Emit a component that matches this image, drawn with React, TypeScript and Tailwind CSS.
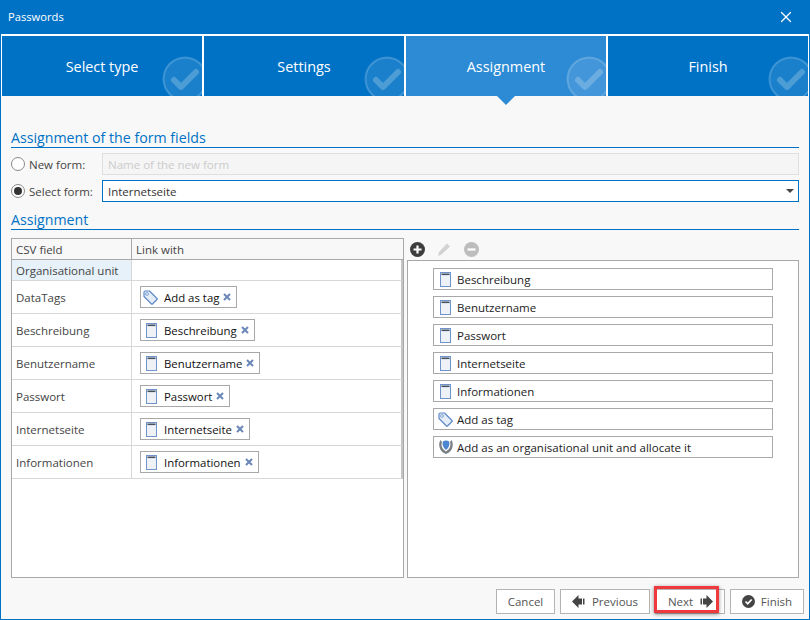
import { X } from "lucide-react";

const font = "font-['Open_Sans','Noto_Sans',sans-serif]";

function DocIcon() {
  return (
    <svg width="11" height="15" viewBox="0 0 11 15" className="shrink-0">
      <rect x="0.5" y="0.5" width="10" height="14" fill="#eef1f6" stroke="#6f93cc" />
      <rect x="1.500" y="1.500" width="8" height="1.600" fill="#46505f" />
    </svg>
  );
}

function TagIcon() {
  return (
    <svg width="15" height="15" viewBox="0 0 15 15" className="shrink-0">
      <path d="M1 2.200Q1 1 2.200 1H6.500L14 8.500Q14.500 9 14 9.500L9.500 14Q9 14.500 8.500 14L1 6.500z" fill="#e4ecf7" stroke="#5f8ac9" strokeWidth="1.200" strokeLinejoin="round" />
      <circle cx="4" cy="4" r="1.400" fill="#fff" stroke="#5f8ac9" strokeWidth="0.8" />
    </svg>
  );
}

function UnitIcon() {
  return (
    <svg width="16" height="16" viewBox="0 0 16 16" className="shrink-0">
      <path d="M2.500 1C.5 4 .5 10 5 13.500L8 15l3-1.500C15.500 10 15.500 4 13.500 1L12 3c1 3 .5 6.500-4 9.500C3.500 9.500 3 6 4 3z" fill="#7a7f87" />
      <path d="M4.800 2.500Q8 .5 11.200 2.500C12 6 10.800 8.800 8 11 5.200 8.800 4 6 4.800 2.500z" fill="#4d86d0" />
    </svg>
  );
}

function Tab({ label, active }: { label: string; active?: boolean }) {
  return (
    <div
      className={`relative flex-1 h-[60px] flex items-center justify-center text-[14.400px] text-white ${active ? "bg-[#2d8bd5]" : "bg-[#0072c6]"}`}
    >
      <span className="pt-[2px]">{label}</span>
      <div className="absolute inset-0 overflow-hidden">
        <svg width="46" height="46" viewBox="0 0 46 46" className="absolute right-[-6px] top-[20px]">
          <circle cx="23" cy="23" r="21.500" fill="#ffffff" fillOpacity="0.1" stroke="#ffffff" strokeOpacity="0.2" strokeWidth="2" />
          <path d="M12 24l7 7 15-15" fill="none" stroke="#ffffff" strokeOpacity="0.22" strokeWidth="6" strokeLinecap="round" strokeLinejoin="round" />
        </svg>
      </div>
      {active && (
        <div className="absolute left-1/2 -translate-x-1/2 bottom-[-9px] w-0 h-0 border-l-[9px] border-r-[9px] border-t-[9px] border-l-transparent border-r-transparent border-t-[#2d8bd5]" />
      )}
    </div>
  );
}

function Heading({ children }: { children: string }) {
  return (
    <div className="h-[19px] border-b border-[#0072c6] text-[14.200px] leading-[18px] text-[#0072c6]">
      {children}
    </div>
  );
}

function Radio({ label, checked }: { label: string; checked?: boolean }) {
  return (
    <div className="w-[91px] shrink-0 flex items-center gap-[4px] text-[11.500px] text-[#444]">
      <div className="size-[14px] rounded-full border border-[#8a8a8a] bg-white flex items-center justify-center">
        {checked && <div className="size-[8px] rounded-full bg-[#333]" />}
      </div>
      <span className="pt-[1px]">{label}</span>
    </div>
  );
}

function Chip({ icon, label }: { icon: "doc" | "tag"; label: string }) {
  return (
    <div className="h-[22px] inline-flex items-center border border-[#a8a8a8] bg-white pr-[5px] text-[11.400px] text-[#111]">
      <span className={`w-[23px] flex shrink-0 ${icon === "doc" ? "pl-[5px]" : "pl-[2px]"}`}>
        {icon === "doc" ? <DocIcon /> : <TagIcon />}
      </span>
      <span className="pt-[1px]">{label}</span>
      <svg width="8" height="8" viewBox="0 0 8 8" className="ml-[4px]">
        <path d="M1 1l6 6M7 1L1 7" stroke="#6b86b8" strokeWidth="2" />
      </svg>
    </div>
  );
}

function Row({ name, icon, label }: { name: string; icon: "doc" | "tag"; label: string }) {
  return (
    <div className="h-[33px] flex border-b border-r-[2px] border-b-[#d8d8d8] border-r-[#c4c4c4]">
      <div className="w-[120px] shrink-0 border-r border-[#d8d8d8] pl-[4px] pt-[1px] flex items-center text-[11.500px] text-[#444]">{name}</div>
      <div className="pl-[8px] flex items-center">
        <Chip icon={icon} label={label} />
      </div>
    </div>
  );
}

function Item({ icon, label }: { icon: React.ReactNode; label: string }) {
  return (
    <div className="h-[22px] flex items-center border border-[#a8a8a8] bg-white text-[11.500px] text-[#222]">
      <span className="w-[23px] shrink-0 flex justify-center">{icon}</span>
      <span className="pt-[1px]">{label}</span>
    </div>
  );
}

function Btn({ children, className = "" }: { children: React.ReactNode; className?: string }) {
  return (
    <div className={`h-[25px] flex items-center justify-center gap-[6px] border border-[#b4b4b4] bg-white text-[11.500px] text-[#555] ${className}`}>
      {children}
    </div>
  );
}

export default function App() {
  return (
    <div className={`w-[810px] h-[620px] flex flex-col overflow-hidden bg-[#0072c6] ${font}`}>
      <div className="h-[34px] shrink-0 flex items-center justify-between pl-[8px] pr-[15px] text-[11.200px] text-white">
        <span className="pt-[1px]">Passwords</span>
        <X size={18} strokeWidth={1.7} />
      </div>

      <div className="flex-1 mx-[1px] mb-[1px] bg-[#f8f8f8] flex flex-col min-h-0">
        <div className="shrink-0 bg-white px-[1px] pt-[2px] flex gap-[2px]">
          <Tab label="Select type" />
          <Tab label="Settings" />
          <Tab label="Assignment" active />
          <Tab label="Finish" />
        </div>

        <div className="flex-1 min-h-0 flex flex-col pl-[10px] pr-[10px] pt-[33px]">
          <Heading>Assignment of the form fields</Heading>
          <div className="mt-[5px] flex items-center h-[22px]">
            <Radio label="New form:" />
            <div className="flex-1 h-[22px] border border-[#dfdfdf] bg-[#f5f5f5] pl-[5px] pt-[1px] flex items-center text-[11.500px] text-[#ccc]">
              Name of the new form
            </div>
          </div>
          <div className="mt-[5px] flex items-center h-[22px]">
            <Radio label="Select form:" checked />
            <div className="flex-1 h-[22px] border border-[#0072c6] bg-white pl-[5px] pr-[4px] flex items-center justify-between text-[11.500px] text-[#333]">
              <span className="pt-[1px]">Internetseite</span>
              <div className="w-0 h-0 border-l-[4px] border-r-[4px] border-t-[4px] border-l-transparent border-r-transparent border-t-[#444]" />
            </div>
          </div>
          <div className="mt-[9px]">
            <Heading>Assignment</Heading>
          </div>

          <div className="mt-[8px] flex-1 min-h-0 flex gap-[3px] mb-[41px]">
            <div className="w-[393px] shrink-0 border border-[#a8a8a8] bg-white">
              <div className="h-[21px] flex border-b border-[#a8a8a8] bg-[#f8f8f8] text-[11.500px] text-[#444]">
                <div className="w-[120px] shrink-0 border-r border-[#a8a8a8] pl-[4px] pt-[1px] flex items-center">CSV field</div>
                <div className="pl-[4px] pt-[1px] flex items-center">Link with</div>
              </div>
              <div className="h-[21px] flex border-b border-r-[2px] border-b-[#d8d8d8] border-r-[#c4c4c4]">
                <div className="w-[120px] shrink-0 border-r border-[#d8d8d8] bg-[#e6f1f9] pl-[4px] pt-[1px] flex items-center text-[11.500px] text-[#444]">Organisational unit</div>
              </div>
              <Row name="DataTags" icon="tag" label="Add as tag" />
              <Row name="Beschreibung" icon="doc" label="Beschreibung" />
              <Row name="Benutzername" icon="doc" label="Benutzername" />
              <Row name="Passwort" icon="doc" label="Passwort" />
              <Row name="Internetseite" icon="doc" label="Internetseite" />
              <Row name="Informationen" icon="doc" label="Informationen" />
            </div>

            <div className="flex-1 flex flex-col min-w-0">
              <div className="h-[22px] shrink-0 flex items-center gap-[12px] pl-[3px]">
                <svg width="15" height="15" viewBox="0 0 15 15">
                  <circle cx="7.500" cy="7.500" r="7.500" fill="#3d3d3d" />
                  <path d="M7.500 3.500v8M3.500 7.500h8" stroke="#fff" strokeWidth="2.200" />
                </svg>
                <svg width="15" height="15" viewBox="0 0 15 15">
                  <path d="M1 14l1-4 8-8.500 3 3-8.500 8z" fill="#d2d2d2" />
                </svg>
                <svg width="15" height="15" viewBox="0 0 15 15">
                  <circle cx="7.500" cy="7.500" r="7.500" fill="#bdbdbd" />
                  <path d="M3.500 7.500h8" stroke="#fff" strokeWidth="2.200" />
                </svg>
              </div>
              <div className="flex-1 min-h-0 border border-[#a8a8a8] bg-white pl-[25px] pr-[25px] pt-[7px] flex flex-col gap-[6px]">
                <Item icon={<DocIcon />} label="Beschreibung" />
                <Item icon={<DocIcon />} label="Benutzername" />
                <Item icon={<DocIcon />} label="Passwort" />
                <Item icon={<DocIcon />} label="Internetseite" />
                <Item icon={<DocIcon />} label="Informationen" />
                <Item icon={<TagIcon />} label="Add as tag" />
                <Item icon={<UnitIcon />} label="Add as an organisational unit and allocate it" />
              </div>
            </div>
          </div>
        </div>

        <div className="relative shrink-0 h-[0px]">
          <div className="absolute right-[5px] bottom-[5px] flex gap-[5px]">
            <Btn className="w-[59px]"><span className="pt-[1px]">Cancel</span></Btn>
            <Btn className="w-[90px]">
              <svg width="14" height="13" viewBox="0 0 14 13">
                <path d="M0 6.500l6.500-6.500v3.500h3.500v6H6.500v3.500zM11 3.500h1.500v6H11z" fill="#444" />
              </svg>
              <span className="pt-[1px]">Previous</span>
            </Btn>
            <div className="relative">
              <Btn className="w-[70px] pl-[1px]">
                <span className="pt-[1px]">Next</span>
                <svg width="14" height="13" viewBox="0 0 14 13">
                  <path d="M14 6.500L7.500 0v3.500H4v6h3.500V13zM3 3.500H1.500v6H3z" fill="#444" />
                </svg>
              </Btn>
              <div className="absolute left-[-1px] top-[-3px] w-[65px] h-[27px] border-[3px] border-[#ee3a3f] shadow-[0_1px_4px_rgba(0,0,0,0.45)]" />
            </div>
            <Btn className="w-[74px]">
              <svg width="13" height="13" viewBox="0 0 13 13">
                <circle cx="6.500" cy="6.500" r="6.500" fill="#444" />
                <path d="M3.500 6.500l2.200 2.200 4-4.200" fill="none" stroke="#fff" strokeWidth="1.700" />
              </svg>
              <span className="pt-[1px]">Finish</span>
            </Btn>
          </div>
        </div>
      </div>
    </div>
  );
}
